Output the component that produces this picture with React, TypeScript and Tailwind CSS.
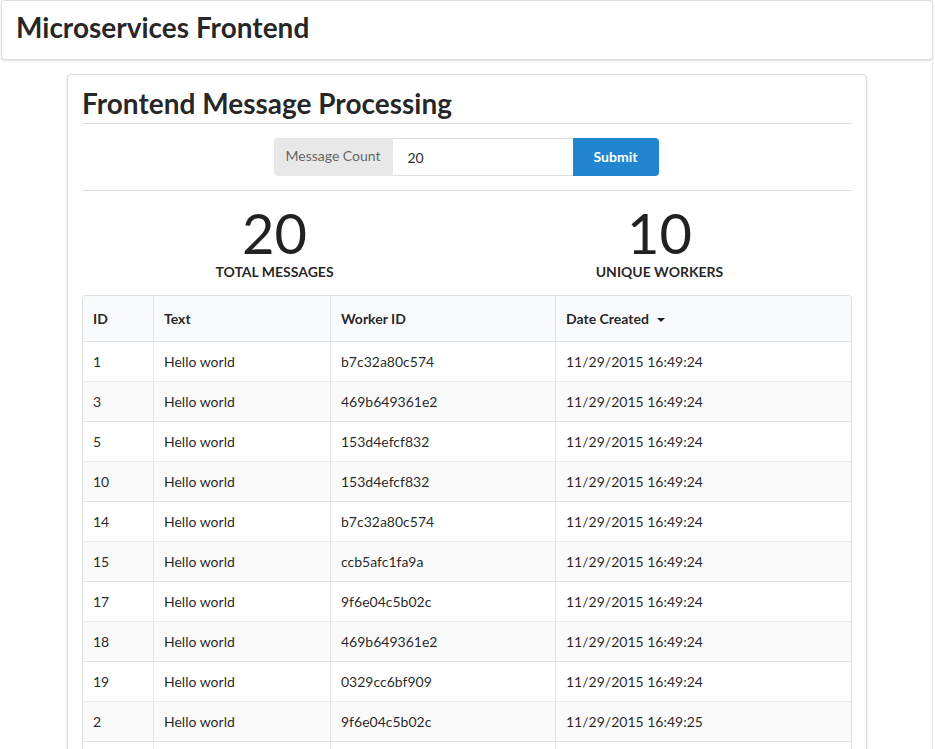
const rows: [string, string, string, string][] = [
  ["1", "Hello world", "b7c32a80c574", "11/29/2015 16:49:24"],
  ["3", "Hello world", "469b649361e2", "11/29/2015 16:49:24"],
  ["5", "Hello world", "153d4efcf832", "11/29/2015 16:49:24"],
  ["10", "Hello world", "153d4efcf832", "11/29/2015 16:49:24"],
  ["14", "Hello world", "b7c32a80c574", "11/29/2015 16:49:24"],
  ["15", "Hello world", "ccb5afc1fa9a", "11/29/2015 16:49:24"],
  ["17", "Hello world", "9f6e04c5b02c", "11/29/2015 16:49:24"],
  ["18", "Hello world", "469b649361e2", "11/29/2015 16:49:24"],
  ["19", "Hello world", "0329cc6bf909", "11/29/2015 16:49:24"],
  ["2", "Hello world", "9f6e04c5b02c", "11/29/2015 16:49:25"],
  ["4", "Hello world", "ccb5afc1fa9a", "11/29/2015 16:49:25"],
  ["6", "Hello world", "0329cc6bf909", "11/29/2015 16:49:25"],
];

const cols = "grid grid-cols-[70px_177px_225px_296px]";

export default function App() {
  return (
    <div className="w-[933px] min-h-screen bg-white font-[Lato,sans-serif] text-[14px] text-[rgba(0,0,0,0.87)]">
      <header className="ml-[1px] w-[932px] h-[60px] border border-[rgba(34,36,38,0.15)] rounded-[4px] shadow-[0_1px_2px_0_rgba(34,36,38,0.15)] px-[14px] pt-[8px] bg-white">
        <h1 className="text-[28px] leading-[36px] font-bold">Microservices Frontend</h1>
      </header>
      <div className="border-r border-[#ebebeb] pt-[14px] pb-10">
        <div className="ml-[67px] w-[800px] border border-[rgba(34,36,38,0.15)] rounded-[4px] shadow-[0_1px_2px_0_rgba(34,36,38,0.15)] p-[14px] bg-white">
          <h2 className="-mt-[4px] text-[28px] leading-[36px] font-bold pb-[2px] border-b border-[rgba(34,36,38,0.15)]">
            Frontend Message Processing
          </h2>
          <div className="mt-[14px] flex justify-center">
            <div className="flex h-[38px] -ml-[2px]">
              <div className="w-[119px] bg-[#e8e8e8] rounded-l-[4px] flex items-center justify-center pb-[3px] text-[rgba(0,0,0,0.6)]">
                Message Count
              </div>
              <div className="w-[180px] border-y border-[rgba(34,36,38,0.15)] flex items-center pl-[15px] text-[rgba(0,0,0,0.87)]">
                20
              </div>
              <button className="w-[86px] bg-[#2185d0] rounded-r-[4px] text-white font-bold flex items-center justify-center pb-[1px]">
                Submit
              </button>
            </div>
          </div>
          <div className="mt-[14px] border-t border-[rgba(34,36,38,0.15)]" />
          <div className="mt-[14px] grid grid-cols-2">
            <div className="flex flex-col items-center">
              <div className="text-[56px] leading-[56px]">20</div>
              <div className="mt-[1px] leading-[20px] font-bold uppercase">Total Messages</div>
            </div>
            <div className="flex flex-col items-center">
              <div className="text-[56px] leading-[56px]">10</div>
              <div className="mt-[1px] leading-[20px] font-bold uppercase">Unique Workers</div>
            </div>
          </div>
          <div className="mt-[13px] w-[770px] border border-[rgba(34,36,38,0.15)] rounded-[4px] overflow-hidden">
            <div className={`${cols} h-[46px] bg-[#f9fafb] border-b border-[rgba(34,36,38,0.1)] font-bold`}>
              <div className="flex items-center pl-[10px]">ID</div>
              <div className="flex items-center pl-[10px] border-l border-[rgba(34,36,38,0.1)]">Text</div>
              <div className="flex items-center pl-[10px] border-l border-[rgba(34,36,38,0.1)]">Worker ID</div>
              <div className="flex items-center pl-[10px] border-l border-[rgba(34,36,38,0.1)]">
                Date Created
                <span className="ml-[8px] mt-[3px] inline-block w-0 h-0 border-x-[4px] border-x-transparent border-t-[4px] border-t-[rgba(0,0,0,0.87)]" />
              </div>
            </div>
            {rows.map((r, i) => (
              <div
                key={i}
                className={`${cols} h-[40px] border-b border-[rgba(34,36,38,0.1)] ${i % 2 === 1 ? "bg-[rgba(0,0,50,0.02)]" : "bg-white"}`}
              >
                <div className="flex items-center pl-[10px]">{r[0]}</div>
                <div className="flex items-center pl-[10px] border-l border-[rgba(34,36,38,0.1)]">{r[1]}</div>
                <div className="flex items-center pl-[10px] border-l border-[rgba(34,36,38,0.1)]">{r[2]}</div>
                <div className="flex items-center pl-[10px] border-l border-[rgba(34,36,38,0.1)]">{r[3]}</div>
              </div>
            ))}
          </div>
        </div>
      </div>
    </div>
  );
}
